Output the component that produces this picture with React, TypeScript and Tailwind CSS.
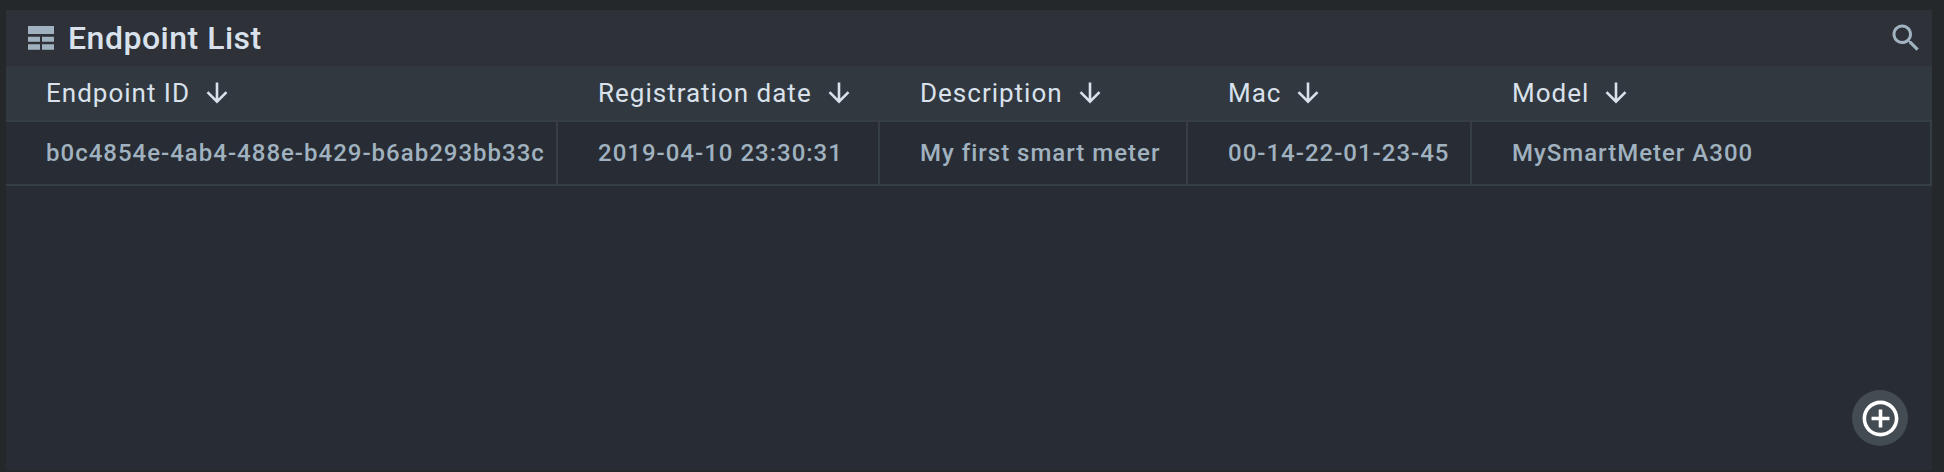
const columns = [
  { title: "Endpoint ID", value: "b0c4854e-4ab4-488e-b429-b6ab293bb33c", width: "w-[552px]" },
  { title: "Registration date", value: "2019-04-10 23:30:31", width: "w-[322px]" },
  { title: "Description", value: "My first smart meter", width: "w-[308px]" },
  { title: "Mac", value: "00-14-22-01-23-45", width: "w-[284px]" },
  { title: "Model", value: "MySmartMeter A300", width: "w-[460px]" },
];

function TableIcon() {
  return (
    <svg className="h-6 w-[26px] shrink-0" viewBox="0 0 26 24" fill="#a0b2bf">
      <path d="M0 0h26v8H0zM0 10.7h12v5H0zM14 10.7h12v5H14zM0 18.3h12v5.5H0zM14 18.3h12v5.5H14z" />
    </svg>
  );
}

function SearchIcon() {
  return (
    <svg className="size-9" viewBox="0 0 24 24" fill="#a0b2bf">
      <path d="M15.5 14h-.79l-.28-.27C15.41 12.59 16 11.11 16 9.5 16 5.91 13.09 3 9.5 3S3 5.91 3 9.5 5.91 16 9.5 16c1.61 0 3.09-.59 4.23-1.57l.27.28v.79l5 4.99L20.49 19l-4.99-5zm-6 0C7.01 14 5 11.99 5 9.5S7.01 5 9.5 5 14 7.01 14 9.5 11.99 14 9.5 14z" />
    </svg>
  );
}

function ArrowDownIcon() {
  return (
    <svg className="h-[22px] w-[22px] shrink-0" viewBox="0 0 22 22" fill="none" stroke="#d9e2ec" strokeWidth="2.6">
      <path d="M11 0.5v18.5M1.5 10.2L11 19.7l9.5-9.5" />
    </svg>
  );
}

function AddIcon() {
  return (
    <svg className="size-[43px]" viewBox="0 0 24 24" fill="#fff">
      <path d="M13 7h-2v4H7v2h4v4h2v-4h4v-2h-4V7zm-1-5C6.48 2 2 6.48 2 12s4.48 10 10 10 10-4.48 10-10S17.52 2 12 2zm0 18c-4.41 0-8-3.59-8-8s3.59-8 8-8 8 3.59 8 8-3.59 8-8 8z" />
    </svg>
  );
}

export default function App() {
  return (
    <div className="h-[472px] w-[1944px] overflow-hidden bg-[#25282b] pt-2.5 pl-1.5 font-['Roboto',sans-serif]">
      <section className="relative h-[460px] w-[1926px] bg-[#282c34]">
        <header className="flex h-14 items-center justify-between bg-[#2e3138] pr-2 pl-[22px]">
          <div className="flex items-center gap-3.5">
            <TableIcon />
            <h1 className="text-[32px] leading-none font-medium tracking-[0.5px] text-[#d9e2ec]">Endpoint List</h1>
          </div>
          <SearchIcon />
        </header>
        <div className="flex h-14 border-b-2 border-[#373f46] bg-[#32383f]">
          {columns.map((c) => (
            <div key={c.title} className={`${c.width} flex items-center gap-4 pl-10 text-[26px] tracking-[1px] text-[#d9e2ec]`}>
              <span className="leading-none whitespace-nowrap">{c.title}</span>
              <ArrowDownIcon />
            </div>
          ))}
        </div>
        <div className="flex h-16 border-b-2 border-[#373f46]">
          {columns.map((c) => (
            <div key={c.title} className={`${c.width} flex items-center border-r-2 border-[#373f46] pl-10 text-2xl font-medium tracking-[1px] whitespace-nowrap text-[#a0b2bf]`}>
              {c.value}
            </div>
          ))}
        </div>
        <button aria-label="Add endpoint" className="absolute right-6 bottom-6 flex size-14 items-center justify-center rounded-full bg-[#444c53]">
          <AddIcon />
        </button>
      </section>
    </div>
  );
}
